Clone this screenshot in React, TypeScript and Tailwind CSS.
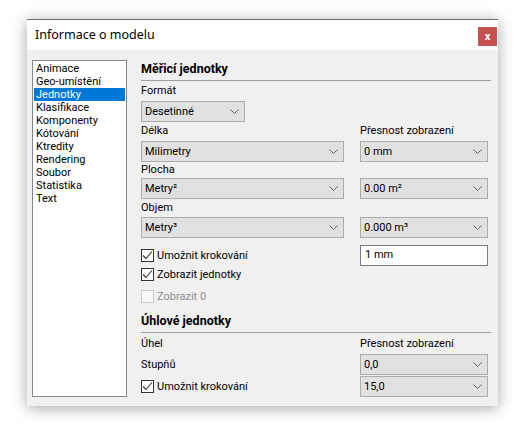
import React from 'react';

const font = { fontFamily: 'Roboto, "Noto Sans", sans-serif' };
const titleFont = { fontFamily: '"Noto Sans", "Open Sans", sans-serif' };

const categories = [
  'Animace',
  'Geo-umístění',
  'Jednotky',
  'Klasifikace',
  'Komponenty',
  'Kótování',
  'Ktredity',
  'Rendering',
  'Soubor',
  'Statistika',
  'Text',
];

const Chevron = () => (
  <svg width="9" height="5" viewBox="0 0 9 5" className="shrink-0">
    <path d="M0.5 0.5 L4.5 4.5 L8.5 0.5" fill="none" stroke="#606060" strokeWidth="1" />
  </svg>
);

const Select: React.FC<{ value: string; className?: string }> = ({ value, className = '' }) => (
  <div
    className={`flex h-[21px] items-center justify-between border border-[#adadad] bg-[#e1e1e1] pl-[3px] pr-[5px] ${className}`}
  >
    <span className="leading-[19px]">{value}</span>
    <Chevron />
  </div>
);

const Checkbox: React.FC<{ label: string; checked?: boolean; disabled?: boolean }> = ({
  label,
  checked = false,
  disabled = false,
}) => (
  <label className="flex h-[13px] items-center">
    <span
      className={`flex h-[13px] w-[13px] shrink-0 items-center justify-center border ${
        disabled ? 'border-[#cccccc] bg-[#f7f7f7]' : 'border-[#333333] bg-white'
      }`}
    >
      {checked && (
        <svg width="11" height="11" viewBox="0 0 11 11">
          <path d="M1 5.5 L4 8.5 L10 1.5" fill="none" stroke="#333333" strokeWidth="1.1" />
        </svg>
      )}
    </span>
    <span className={`ml-[3px] leading-[13px] ${disabled ? 'text-[#8d8d8d]' : ''}`}>{label}</span>
  </label>
);

const Heading: React.FC<{ children: React.ReactNode }> = ({ children }) => (
  <div>
    <div className="h-[16px] text-[12.5px] font-bold leading-[16px]">{children}</div>
    <div className="mt-[3px] h-px bg-[#a0a0a0]" />
  </div>
);

export default function App() {
  return (
    <div
      className="h-[433px] w-[525px] bg-white pl-[27px] pt-[19px] text-[11px] text-black"
      style={font}
    >
      <div className="flex h-[387px] w-[471px] flex-col bg-[#f0f0f0] shadow-[0_2px_14px_rgba(0,0,0,0.35)]">
        {/* title bar */}
        <div className="flex h-[31px] shrink-0 items-start justify-between border-t border-[#707070] bg-white">
          <span className="ml-[8px] mt-[6px] text-[12.5px] leading-[18px]" style={titleFont}>
            Informace o modelu
          </span>
          <button className="mr-px mt-[7px] flex h-[19px] w-[19px] items-center justify-center bg-[#c75050] text-[11px] font-bold leading-none text-white">
            x
          </button>
        </div>

        {/* body */}
        <div className="flex flex-1 pb-[10px] pl-[5px] pr-[7px] pt-[10px]">
          <ul className="w-[95px] shrink-0 border border-[#828790] bg-white p-px">
            {categories.map((c) => (
              <li
                key={c}
                className={`h-[13px] pl-[2px] leading-[13px] ${
                  c === 'Jednotky' ? 'bg-[#0078d7] text-white' : ''
                }`}
              >
                {c}
              </li>
            ))}
          </ul>

          <div className="ml-[14px] flex flex-1 flex-col pt-[1px]">
            <Heading>Měřicí jednotky</Heading>

            <div className="mt-[2px] h-[16px] leading-[16px]">Formát</div>
            <Select value="Desetinné" className="mt-[2px] h-[20px] w-[104px]" />

            <div className="mt-px grid grid-cols-[203px_128px] gap-x-[16px]">
              <div className="h-[16px] leading-[16px]">Délka</div>
              <div className="h-[16px] leading-[16px]">Přesnost zobrazení</div>
            </div>
            <div className="mt-[2px] grid grid-cols-[203px_128px] gap-x-[16px]">
              <Select value="Milimetry" />
              <Select value="0 mm" />
            </div>
            <div className="h-[16px] leading-[16px]">Plocha</div>
            <div className="grid grid-cols-[203px_128px] gap-x-[16px]">
              <Select value="Metry²" />
              <Select value="0.00 m²" />
            </div>
            <div className="mt-px h-[16px] leading-[16px]">Objem</div>
            <div className="mt-px grid grid-cols-[203px_128px] gap-x-[16px]">
              <Select value="Metry³" />
              <Select value="0.000 m³" />
            </div>

            <div className="mt-[7px] grid grid-cols-[203px_128px] items-center gap-x-[16px]">
              <Checkbox label="Umožnit krokování" checked />
              <div className="flex h-[21px] items-center border border-[#7a7a7a] bg-white pl-[4px]">
                1 mm
              </div>
            </div>
            <div className="mt-[2px]">
              <Checkbox label="Zobrazit jednotky" checked />
            </div>
            <div className="mt-[9px]">
              <Checkbox label="Zobrazit 0" disabled />
            </div>

            <div className="mt-[10px]">
              <Heading>Úhlové jednotky</Heading>
            </div>
            <div className="mt-[3px] grid grid-cols-[203px_128px] gap-x-[16px]">
              <div className="h-[16px] leading-[16px]">Úhel</div>
              <div className="h-[16px] leading-[16px]">Přesnost zobrazení</div>
            </div>
            <div className="mt-[2px] grid grid-cols-[203px_128px] items-center gap-x-[16px]">
              <div className="leading-[16px]">Stupňů</div>
              <Select value="0,0" />
            </div>
            <div className="mt-px grid grid-cols-[203px_128px] items-center gap-x-[16px]">
              <Checkbox label="Umožnit krokování" checked />
              <Select value="15,0" />
            </div>
          </div>
        </div>
      </div>
    </div>
  );
}
